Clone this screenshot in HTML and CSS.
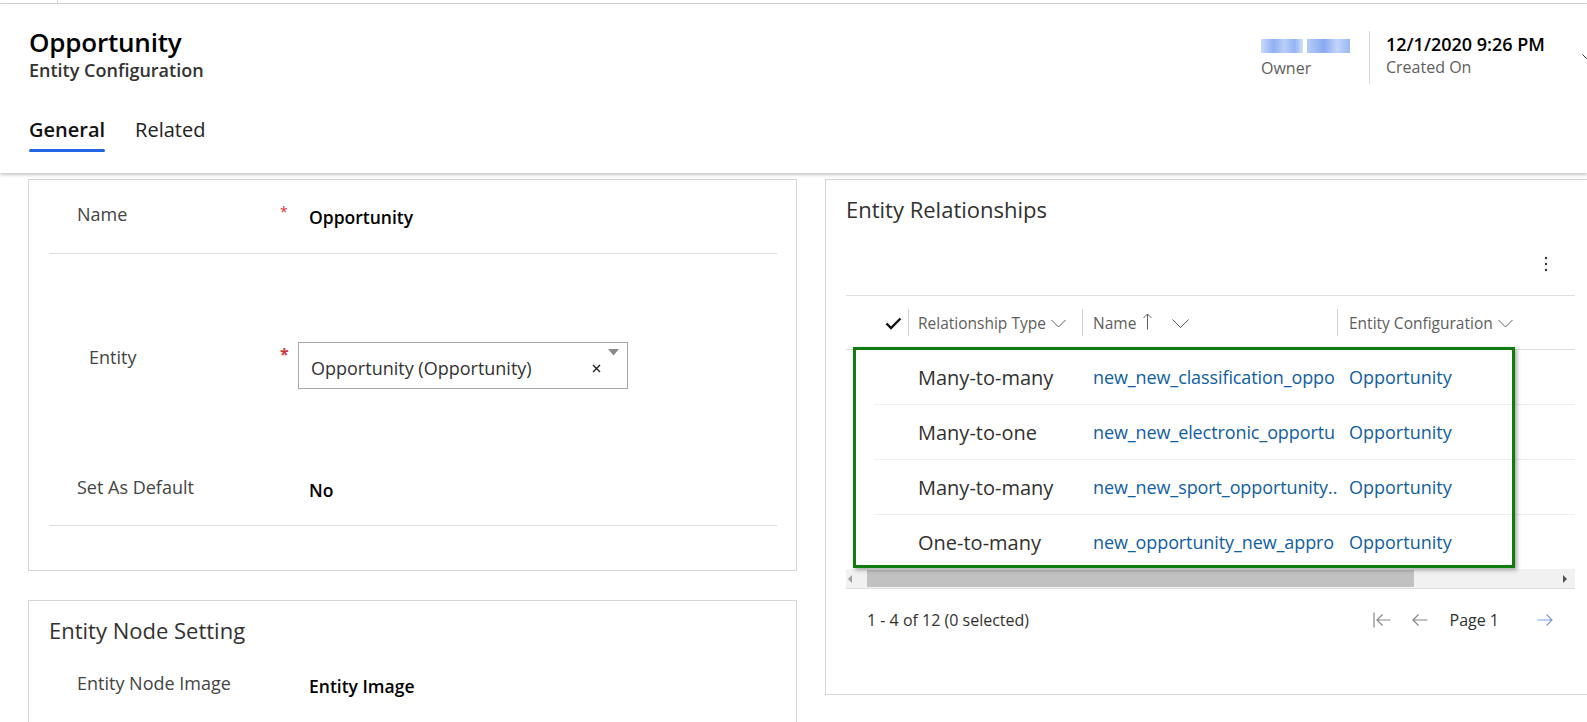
FILE: index.html
```html
<!DOCTYPE html>
<html>
<head>
<meta charset="utf-8">
<link rel="stylesheet" href="styles.css">
</head>
<body>
<div class="page">
  <div class="topstrip"><div class="topstrip-tab"></div></div>
  <header class="header">
    <div class="header-top">
      <div class="titles">
        <div class="title">Opportunity</div>
        <div class="subtitle">Entity Configuration</div>
      </div>
      <div class="meta">
        <div class="meta-col owner">
          <div class="blurname"><span class="b1"></span><span class="b2"></span></div>
          <div class="meta-label">Owner</div>
        </div>
        <div class="meta-col created">
          <div class="meta-value">12/1/2020 9:26 PM</div>
          <div class="meta-label">Created On</div>
        </div>
        <svg class="hdr-chev" width="9" height="6" viewBox="0 0 9 6"><path d="M0.5 0.5 L4.5 4.5 L8.5 0.5" fill="none" stroke="#333" stroke-width="1"/></svg>
      </div>
    </div>
    <nav class="tabs">
      <div class="tab active">General</div>
      <div class="tab">Related</div>
    </nav>
  </header>

  <main class="content">
    <div class="col-left">
      <section class="card card-main">
        <div class="field row-name">
          <div class="label">Name</div>
          <div class="req">*</div>
          <div class="value">Opportunity</div>
        </div>
        <div class="sep"></div>
        <div class="group2">
          <div class="field row-entity">
            <div class="label label-entity">Entity</div>
            <div class="req req-entity">*</div>
            <div class="input">
              <span class="input-text">Opportunity (Opportunity)</span>
              <svg class="input-x" width="9" height="9" viewBox="0 0 9 9"><path d="M1 1 L8 8 M8 1 L1 8" stroke="#222" stroke-width="1.4"/></svg>
              <svg class="input-tri" width="11" height="7" viewBox="0 0 11 7"><path d="M0 0 H11 L5.5 6.5 Z" fill="#8a8a8a"/></svg>
            </div>
          </div>
          <div class="field row-default">
            <div class="label">Set As Default</div>
            <div class="req blank"></div>
            <div class="value">No</div>
          </div>
        </div>
        <div class="sep"></div>
      </section>

      <section class="card card-node">
        <h2 class="card-title">Entity Node Setting</h2>
        <div class="field row-node">
          <div class="label">Entity Node Image</div>
          <div class="req blank"></div>
          <div class="value">Entity Image</div>
        </div>
      </section>
    </div>

    <div class="col-right">
      <section class="card card-rel">
        <h2 class="card-title rel-title">Entity Relationships</h2>
        <div class="toolbar">
          <svg width="4" height="16" viewBox="0 0 4 16"><circle cx="2" cy="2" r="1.2" fill="#333"/><circle cx="2" cy="8" r="1.2" fill="#333"/><circle cx="2" cy="14" r="1.2" fill="#333"/></svg>
        </div>
        <div class="grid">
          <div class="grid-head">
            <div class="hc hc-check">
              <svg width="17" height="13" viewBox="0 0 17 13"><path d="M1.5 6.5 L6 11 L15.5 1.5" fill="none" stroke="#111" stroke-width="2.4"/></svg>
            </div>
            <span class="hdiv"></span>
            <div class="hc hc-type">Relationship Type
              <svg class="chev" width="15" height="9" viewBox="0 0 15 9"><path d="M0.5 1 L7.5 8 L14.5 1" fill="none" stroke="#605e5c" stroke-width="1"/></svg>
            </div>
            <span class="hdiv"></span>
            <div class="hc hc-name">Name
              <svg class="sortup" width="9" height="17" viewBox="0 0 9 17"><path d="M4.5 16.5 V1 M0.5 5 L4.5 1 L8.5 5" fill="none" stroke="#605e5c" stroke-width="1"/></svg>
              <svg class="chev chev-name" width="17" height="9" viewBox="0 0 17 9"><path d="M0.5 0.5 L8.5 8.5 L16.5 0.5" fill="none" stroke="#605e5c" stroke-width="1"/></svg>
            </div>
            <span class="hdiv"></span>
            <div class="hc hc-ent">Entity Configuration
              <svg class="chev" width="15" height="9" viewBox="0 0 15 9"><path d="M0.5 1 L7.5 8 L14.5 1" fill="none" stroke="#605e5c" stroke-width="1"/></svg>
            </div>
          </div>
          <div class="grid-body">
            <div class="grow">
              <div class="c-type">Many-to-many</div>
              <div class="c-name">new_new_classification_oppo</div>
              <div class="c-ent">Opportunity</div>
            </div>
            <div class="grow">
              <div class="c-type">Many-to-one</div>
              <div class="c-name">new_new_electronic_opportu</div>
              <div class="c-ent">Opportunity</div>
            </div>
            <div class="grow">
              <div class="c-type">Many-to-many</div>
              <div class="c-name">new_new_sport_opportunity..</div>
              <div class="c-ent">Opportunity</div>
            </div>
            <div class="grow last">
              <div class="c-type">One-to-many</div>
              <div class="c-name">new_opportunity_new_appro</div>
              <div class="c-ent">Opportunity</div>
            </div>
            <div class="highlight"></div>
          </div>
          <div class="hscroll">
            <svg class="sarrow" width="5" height="8" viewBox="0 0 5 8"><path d="M4 0 V8 L0 4 Z" fill="#a0a0a0"/></svg>
            <div class="strack"><div class="sthumb"></div></div>
            <svg class="sarrow" width="5" height="8" viewBox="0 0 5 8"><path d="M1 0 V8 L5 4 Z" fill="#505050"/></svg>
          </div>
          <div class="grid-foot">
            <div class="count">1 - 4 of 12 (0 selected)</div>
            <div class="pager">
              <svg width="18" height="16" viewBox="0 0 18 16"><path d="M1 0.5 V15.5 M17.5 8 H4 M9.5 2.5 L4 8 L9.5 13.5" fill="none" stroke="#8a8886" stroke-width="1.2"/></svg>
              <svg class="pg-prev" width="17" height="16" viewBox="0 0 17 16"><path d="M16.5 8 H2 M7.5 2.5 L2 8 L7.5 13.5" fill="none" stroke="#8a8886" stroke-width="1.2"/></svg>
              <span class="pg-label">Page 1</span>
              <svg class="pg-next" width="17" height="16" viewBox="0 0 17 16"><path d="M0.5 8 H15 M9.5 2.5 L15 8 L9.5 13.5" fill="none" stroke="#7f9ed3" stroke-width="1.2"/></svg>
            </div>
          </div>
        </div>
      </section>
    </div>
  </main>
</div>
</body>
</html>
```

FILE: styles.css
```css
* { box-sizing: border-box; }
html, body { margin: 0; padding: 0; background: #fff; }
body {
  font-family: "Segoe UI", "Open Sans", "Noto Sans", "Liberation Sans", sans-serif;
  color: #323130;
  overflow: hidden;
  width: 1587px;
  height: 722px;
}
.page { width: 1587px; height: 722px; overflow: hidden; }

.topstrip {
  height: 4px;
  border-bottom: 1px solid #d4d4d4;
}
.topstrip-tab { width: 58px; height: 3px; border-right: 1px solid #d4d4d4; }

.header {
  height: 169px;
  background: #fff;
  box-shadow: 0 2px 3px rgba(0,0,0,0.22);
  position: relative;
  z-index: 2;
  padding-left: 29px;
}
.header-top { display: flex; justify-content: space-between; height: 100px; }
.titles { padding-top: 22px; }
.title { font-size: 26px; font-weight: 600; line-height: 32px; color: #000; letter-spacing: -0.2px; }
.subtitle { font-size: 18px; font-weight: 600; line-height: 24px; color: #333; }

.meta { display: flex; align-items: flex-start; padding-top: 26px; }
.meta-col { display: flex; flex-direction: column; }
.owner { width: 109px; padding-top: 8px; border-right: 1px solid #d8d8d8; height: 53px; margin-top: 1px; }
.blurname { display: flex; gap: 4px; height: 14px; margin-bottom: 5px; }
.blurname .b1 { width: 42px; background: linear-gradient(90deg, #c9d9fb, #8fb0f3 30%, #b9cdf8 55%, #94b4f4 80%, #d3e0fb); }
.blurname .b2 { width: 43px; background: linear-gradient(90deg, #b7cbf7, #88aaf2 40%, #c3d4f9 70%, #9ab8f4); }
.meta-label { font-size: 16px; color: #605e5c; line-height: 20px; }
.created { padding-left: 16px; padding-top: 3px; width: 212px; }
.meta-value { font-size: 18px; font-weight: 600; color: #000; line-height: 22px; margin-bottom: 2px; }
.hdr-chev { margin-top: 24px; margin-right: -4px; }

.tabs { display: flex; gap: 30px; padding-top: 12px; }
.tab { font-size: 20px; line-height: 28px; color: #222; padding-bottom: 8px; }
.tab.active { font-weight: 600; color: #111; position: relative; }
.tab.active::after {
  content: ""; position: absolute; left: 0; right: 0; bottom: 0; height: 3px;
  background: #2266e3; border-radius: 2px;
}

.content { display: flex; gap: 28px; padding-left: 28px; padding-top: 6px; width: 1640px; }
.col-left { width: 769px; display: flex; flex-direction: column; gap: 29px; }
.col-right { width: 772px; }

.card { border: 1px solid #d6d6d6; background: #fff; }
.card-main { height: 392px; padding: 0 19px 0 20px; }
.card-node { height: 160px; padding: 0 19px 0 20px; }
.card-rel { height: 516px; padding: 0 21px 0 20px; }

.card-title { margin: 0; font-size: 22px; font-weight: 400; color: #323130; line-height: 26px; }
.card-node .card-title { padding-top: 16px; }
.rel-title { padding-top: 16px; }

.field { display: flex; align-items: center; padding-left: 28px; font-size: 18px; }
.label { width: 203px; color: #444; white-space: nowrap; }
.req { width: 29px; color: #d13438; font-size: 14px; align-self: flex-start; }
.req.blank { visibility: hidden; }
.value { font-weight: 600; color: #000; font-size: 17.5px; }

.row-name { height: 73px; }
.row-name .label { margin-top: -5px; }
.row-name .req { margin-top: 22px; }
.sep { height: 1px; background: #dcdcdc; }

.group2 { height: 271px; padding-top: 88px; }
.row-entity { height: 47px; align-items: flex-start; }
.label-entity { padding-left: 12px; margin-top: 3px; }
.req-entity { margin-top: 1px; font-size: 16px; font-weight: 700; }
.input {
  position: relative;
  width: 330px; height: 47px; margin-left: -11px;
  border: 1px solid #a8a8a8;
  display: flex; align-items: center;
  padding-left: 12px;
  font-size: 18px; color: #333;
}
.input-text { flex: 1; padding-top: 4px; white-space: nowrap; }
.input-x { margin-right: 26px; margin-top: 6px; }
.input-tri { position: absolute; right: 8px; top: 6px; }

.row-default { height: 40px; margin-top: 81px; }
.row-default .label { margin-top: -6px; }

.row-node { height: 40px; margin-top: 23px; }
.row-node .label { margin-top: -6px; }

.toolbar { display: flex; justify-content: flex-end; height: 73px; padding-top: 34px; padding-right: 27px; }
.grid { position: relative; }
.grid-head {
  display: flex; align-items: center; height: 55px;
  border-top: 1px solid #e1dfdd; border-bottom: 1px solid #e1dfdd;
  font-size: 15.5px; color: #605e5c;
}
.hdiv { width: 1px; height: 27px; background: #d2d0ce; }
.hc { display: flex; align-items: center; white-space: nowrap; }
.hc-check { width: 62px; justify-content: flex-end; padding-right: 6px; padding-top: 2px; }
.hc-type { width: 173px; padding-left: 9px; }
.hc-type .chev, .hc-ent .chev { margin-left: 5px; margin-top: 2px; }
.hc-name { width: 254px; padding-left: 10px; }
.sortup { margin-left: 7px; margin-top: -2px; }
.chev-name { margin-left: 20px; margin-top: 2px; }
.hc-ent { flex: 1; padding-left: 11px; }

.grid-body { position: relative; }
.grow {
  display: flex; align-items: center; height: 55px;
  margin-left: 28px; padding-left: 34px;
  border-bottom: 1px solid #efefef;
  white-space: nowrap;
}
.grow.last { border-bottom: none; height: 54px; }
.c-type { width: 174px; padding-left: 10px; font-size: 20px; color: #323130; }
.c-name { width: 258px; padding-left: 11px; overflow: hidden; font-size: 18px; color: #115ea3; letter-spacing: -0.1px; }
.c-ent { padding-left: 9px; font-size: 18px; color: #115ea3; }

.highlight {
  position: absolute; left: 7px; top: -3px; width: 662px; height: 221px;
  border: 3px solid #0e7c0e;
  box-shadow: 2px 2px 4px rgba(0,0,0,0.35);
  pointer-events: none;
}

.hscroll {
  display: flex; align-items: center; height: 20px;
  background: #f1f1f1; border-bottom: 1px solid #e1dfdd;
  padding: 0 8px 0 2px;
}
.strack { flex: 1; height: 17px; padding-left: 14px; }
.sthumb { width: 547px; height: 17px; background: #c1c1c1; }

.grid-foot { display: flex; justify-content: space-between; align-items: center; height: 62px; padding-left: 21px; padding-right: 21px; }
.count { font-size: 16px; color: #323130; }
.pager { display: flex; align-items: center; }
.pg-prev { margin-left: 20px; }
.pg-label { margin-left: 22px; font-size: 16px; color: #323130; }
.pg-next { margin-left: 38px; }
```
